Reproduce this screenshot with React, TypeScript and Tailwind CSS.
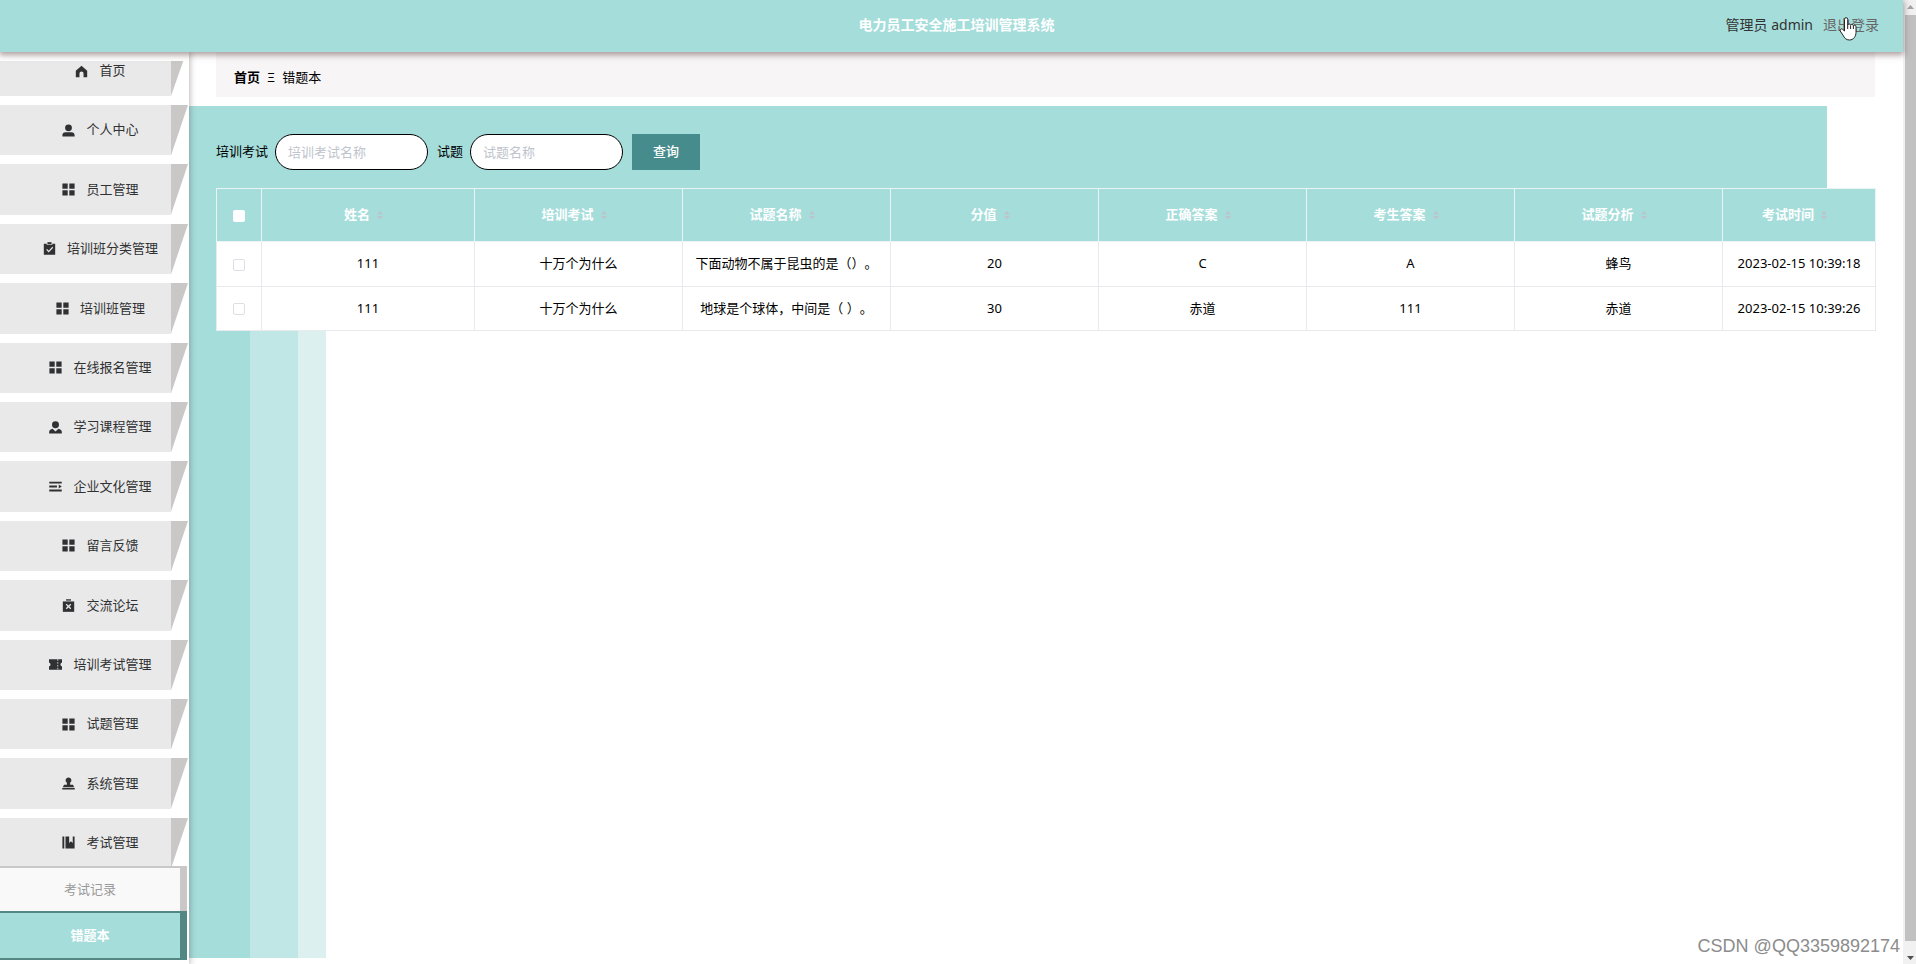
import { useState } from 'react';
import type { ReactNode } from 'react';

type MenuItem = {
  label: string;
  icon: keyof typeof icons;
};

type WrongRecord = {
  id: number;
  userName: string;
  paperName: string;
  questionName: string;
  score: number;
  answer: string;
  myAnswer: string;
  analysis: string;
  createTime: string;
};

const icons: Record<string, ReactNode> = {
  home: <path d="M8 1 15 7v8h-4.500v-4.500a2.500 2.500 0 0 0-5 0V15H1V7z" />,
  user: <path d="M8 0.500a4.200 4.200 0 1 1 0 8.400 4.200 4.200 0 0 1 0-8.400zM0.500 15.500v-1.800c0-2.200 1.600-3.500 3.800-3.500h7.400c2.200 0 3.800 1.300 3.800 3.500v1.800z" />,
  grid: <path d="M0.500 0.500h6.500v6.500H0.500zM9 0.500h6.500v6.500H9zM0.500 9h6.500v6.500H0.500zM9 9h6.500v6.500H9z" />,
  claim: (
    <>
      <path d="M1 2h3.500v1.500h7V2H15v13.800H1z" />
      <path d="M5.500 0.200h5v2.500h-5z" />
      <path d="M4.500 9 7 11.800 12 6.500" fill="none" stroke="#e9e9e9" strokeWidth="1.500" />
    </>
  ),
  custom: <path d="M8 0.300a4.300 4.300 0 1 1 0 8.600 4.300 4.300 0 0 1 0-8.600zM0.200 15.500v-1.800c0-2.200 1.600-3.600 4.200-4.100L8 12.800l3.600-3.200c2.600.5 4.200 1.900 4.200 4.100v1.800z" />,
  operation: <path d="M0.300 2h15.400v2.200H0.300zM0.300 6.900h9.500v2.200H0.300zM0.300 11.800h15.400V14H0.300zM12 5.600 15.700 8 12 10.400z" />,
  release: (
    <>
      <path d="M1 3h14v12.800H1z" />
      <path d="M5 0.300h6v1.700H5z" />
      <path d="m5.200 6.500 5.600 5.600m0-5.600-5.600 5.600" fill="none" stroke="#e9e9e9" strokeWidth="1.600" />
    </>
  ),
  ticket: (
    <>
      <path d="M0 1.500h16v4a2.600 2.600 0 0 0 0 5v4H0v-4a2.600 2.600 0 0 0 0-5z" />
      <path d="M10.800 1.500v13" stroke="#e9e9e9" strokeDasharray="2 1.500" />
    </>
  ),
  stamp: <path d="M8 0.500a3.600 3.600 0 0 1 2 6.600v2.400h3.500L15 12.500H1L2.500 9.500H6V7.100A3.600 3.600 0 0 1 8 .5zM0.300 13.500h15.400v1.800H0.300z" />,
  management: <path d="M0.500 0.500h2.300v15H0.500zM4.300 0.500h4.500v8l2.200-2 2.200 2v-8h2.300v15H4.300z" />,
};

const menuItems: MenuItem[] = [
  { label: '个人中心', icon: 'user' },
  { label: '员工管理', icon: 'grid' },
  { label: '培训班分类管理', icon: 'claim' },
  { label: '培训班管理', icon: 'grid' },
  { label: '在线报名管理', icon: 'grid' },
  { label: '学习课程管理', icon: 'custom' },
  { label: '企业文化管理', icon: 'operation' },
  { label: '留言反馈', icon: 'grid' },
  { label: '交流论坛', icon: 'release' },
  { label: '培训考试管理', icon: 'ticket' },
  { label: '试题管理', icon: 'grid' },
  { label: '系统管理', icon: 'stamp' },
  { label: '考试管理', icon: 'management' },
];

const columns = ['姓名', '培训考试', '试题名称', '分值', '正确答案', '考生答案', '试题分析', '考试时间'];

const records: WrongRecord[] = [
  {
    id: 1,
    userName: '111',
    paperName: '十万个为什么',
    questionName: '下面动物不属于昆虫的是（）。',
    score: 20,
    answer: 'C',
    myAnswer: 'A',
    analysis: '蜂鸟',
    createTime: '2023-02-15 10:39:18',
  },
  {
    id: 2,
    userName: '111',
    paperName: '十万个为什么',
    questionName: '地球是个球体，中间是（ ）。',
    score: 30,
    answer: '赤道',
    myAnswer: '111',
    analysis: '赤道',
    createTime: '2023-02-15 10:39:26',
  },
];

const MenuIcon = ({ name }: { name: string }) => (
  <svg viewBox="0 0 16 16" className="size-[13px] shrink-0 fill-[#303133]" aria-hidden="true">
    {icons[name]}
  </svg>
);

const Fold = ({ points }: { points: string }) => (
  <svg viewBox="0 0 18 51" preserveAspectRatio="none" className="h-full w-[17px] shrink-0" aria-hidden="true">
    <polygon points={points} fill="#cac7c7" />
  </svg>
);

const Header = () => (
  <header className="relative z-20 grid h-[52px] shrink-0 grid-cols-[1fr_auto_1fr] items-center bg-[#a5dddb] pr-6 pb-[2px] pl-[34px] text-sm shadow-[0_2px_6px_1px_rgba(90,60,60,0.5)]">
    <span />
    <h1 className="font-bold text-white">电力员工安全施工培训管理系统</h1>
    <div className="flex justify-end gap-[10px] text-[#333]">
      <span>管理员 admin</span>
      <a href="#logout" className="relative text-[#666]">
        退出登录
        <svg viewBox="0 0 18 24" className="absolute top-0.5 left-4 h-6 w-[18px]" aria-hidden="true">
          <path
            d="M5.500 14V2.300a1.600 1.600 0 0 1 3.200 0V8c.4-1.500 2.800-1.300 2.900.2.500-1.200 2.700-.9 2.800.5.700-1 2.600-.5 2.600 1v5.600c0 4-2.500 7.700-6.500 7.700-3.600 0-5-2-6.500-4.800L1.200 14c-.8-1.600 1.200-2.900 2.500-1.600z"
            fill="#fff"
            stroke="#222"
          />
          <path d="M8.700 8v4M11.600 8.500V12M14.400 9v3" stroke="#222" />
        </svg>
      </a>
    </div>
  </header>
);

const Sidebar = () => (
  <nav className="relative z-10 flex w-[189px] shrink-0 flex-col bg-white pt-[9px] pb-1 text-[13px] text-[#303133] shadow-[0_0_6px_1px_rgba(70,50,50,0.35)]">
    <a href="#home" className="mb-[9px] flex h-[35px] shrink-0">
      <span className="flex flex-1 items-center justify-center gap-[11px] bg-[#e9e9e9] pb-[15px] pl-[30px]">
        <MenuIcon name="home" />
        首页
      </span>
      <Fold points="0,0 13,0 0,51" />
      <span className="w-px" />
    </a>
    <ul className="flex flex-1 flex-col gap-[9px]">
      {menuItems.map((item) => (
        <li key={item.label} className="flex-1">
          <a href={`#${item.icon}`} className="flex h-full">
            <span className="flex flex-1 items-center justify-center gap-[11px] bg-[#e9e9e9] pl-[30px] whitespace-nowrap">
              <MenuIcon name={item.icon} />
              {item.label}
            </span>
            <Fold points="0,0 18,0 0,51" />
            <span className="w-px" />
          </a>
        </li>
      ))}
    </ul>
    <div className="relative -mt-[2px] mr-[2px] text-center">
      <a href="#exam-record" className="flex h-[45px] items-center justify-center border-t-2 border-r-[7px] border-[#cac7c7] bg-[#f9f9f9] text-[#999]">
        考试记录
      </a>
      <a href="#wrong-book" className="flex h-[49px] items-center justify-center border-y-2 border-r-[7px] border-[#528784] bg-[#a5dddb] font-bold text-white">
        错题本
      </a>
    </div>
  </nav>
);

const SearchForm = () => (
  <form className="flex items-center gap-[9px]" onSubmit={(e) => e.preventDefault()}>
    <div className="flex items-center gap-[7px]">
      <label htmlFor="paper">培训考试</label>
      <input
        id="paper"
        placeholder="培训考试名称"
        className="h-9 w-[153px] rounded-full border border-black bg-white px-3 placeholder:text-[#c0c4cc]"
      />
    </div>
    <div className="flex items-center gap-[7px]">
      <label htmlFor="question">试题</label>
      <input
        id="question"
        placeholder="试题名称"
        className="h-9 w-[153px] rounded-full border border-black bg-white px-3 placeholder:text-[#c0c4cc]"
      />
    </div>
    <button type="submit" className="h-9 w-[68px] bg-[#478c8c] font-medium text-white">
      查询
    </button>
  </form>
);

const RecordTable = () => {
  const [selected, setSelected] = useState<number[]>([]);

  const toggle = (id: number) => {
    setSelected((prev) => (prev.includes(id) ? prev.filter((s) => s !== id) : [...prev, id]));
  };

  const toggleAll = () => {
    setSelected(selected.length === records.length ? [] : records.map((r) => r.id));
  };

  return (
    <table className="w-full table-fixed border-collapse bg-white text-center">
      <colgroup>
        <col className="w-[45px]" />
        <col className="w-[213px]" />
        <col span={6} />
        <col className="w-[153px]" />
      </colgroup>
      <thead className="bg-[#a5dddb] text-white">
        <tr className="h-[53px]">
          <th className="border border-[#ebf3f5]">
            <input
              type="checkbox"
              aria-label="全选"
              checked={selected.length === records.length}
              onChange={toggleAll}
              className="size-3 appearance-none rounded-xs bg-white align-middle checked:bg-[#478c8c]"
            />
          </th>
          {columns.map((col) => (
            <th key={col} className="border border-[#ebf3f5] font-bold">
              <span className="flex items-center justify-center">
                {col}
                <svg viewBox="0 0 22 12" className="h-3 w-[22px] fill-[#bcc4cc]" aria-hidden="true">
                  <path d="M7 5.500 10 2l3 3.500zM7 7l3 3.500L13 7z" />
                </svg>
              </span>
            </th>
          ))}
        </tr>
      </thead>
      <tbody>
        {records.map((row) => (
          <tr key={row.id} className="h-[45px] last:h-11">
            <td className="border border-[#e8eaee]">
              <input
                type="checkbox"
                aria-label={`选择 ${row.id}`}
                checked={selected.includes(row.id)}
                onChange={() => toggle(row.id)}
                className="size-3 appearance-none rounded-xs border border-[#dcdfe6] bg-white align-middle checked:bg-[#478c8c]"
              />
            </td>
            <td className="border border-[#e8eaee]">{row.userName}</td>
            <td className="border border-[#e8eaee]">{row.paperName}</td>
            <td className="border border-[#e8eaee] whitespace-nowrap [text-spacing-trim:space-all]">{row.questionName}</td>
            <td className="border border-[#e8eaee]">{row.score}</td>
            <td className="border border-[#e8eaee]">{row.answer}</td>
            <td className="border border-[#e8eaee]">{row.myAnswer}</td>
            <td className="border border-[#e8eaee]">{row.analysis}</td>
            <td className="border border-[#e8eaee]">{row.createTime}</td>
          </tr>
        ))}
      </tbody>
    </table>
  );
};

const ScrollTrack = () => (
  <div className="flex w-[13px] shrink-0 flex-col bg-[#f1f1f1] pl-[2px]" aria-hidden="true">
    <svg viewBox="0 0 11 15" className="h-[15px] shrink-0">
      <path d="M2 9 5.500 5 9 9z" fill="#a3a3a3" />
    </svg>
    <div className="flex-1 bg-[#c1c1c1]" />
    <svg viewBox="0 0 11 23" className="h-[23px] shrink-0">
      <path d="M2 15h7l-3.500 4z" fill="#505050" />
    </svg>
  </div>
);

const App = () => {
  return (
    <div className="relative flex h-screen min-h-[900px] overflow-hidden bg-white font-['Noto_Sans','Noto_Sans_CJK_SC',sans-serif] text-[13px] text-black">
      <div className="flex min-w-0 flex-1 flex-col">
        <Header />
        <div className="flex min-h-0 flex-1">
          <Sidebar />
          <main className="flex min-w-0 flex-1 flex-col pb-[6px]">
            <div className="mr-7 mb-[9px] ml-[27px] flex h-[45px] items-center gap-[7px] bg-[#f7f5f6] pt-[6px] pl-[18px]">
              <a href="#home" className="font-bold">首页</a>
              <span>Ξ</span>
              <span>错题本</span>
            </div>
            <div className="mr-[76px] h-[82px] bg-[#a5dddb] pt-7 pl-[27px]">
              <SearchForm />
            </div>
            <div className="flex">
              <div className="w-[27px] shrink-0 bg-[#a5dddb]" />
              <div className="mr-[27px] min-w-0 flex-1">
                <RecordTable />
              </div>
            </div>
            <div className="flex flex-1">
              <div className="w-[61px] bg-[#a5dddb]" />
              <div className="w-12 bg-[#c0e6e5]" />
              <div className="w-7 bg-[#dcf0ef]" />
            </div>
          </main>
        </div>
      </div>
      <ScrollTrack />
      <p className="absolute right-4 bottom-1 z-30 font-['Liberation_Sans',sans-serif] text-lg text-[#8c8c8c]">
        CSDN @QQ3359892174
      </p>
    </div>
  );
};

export default App;
